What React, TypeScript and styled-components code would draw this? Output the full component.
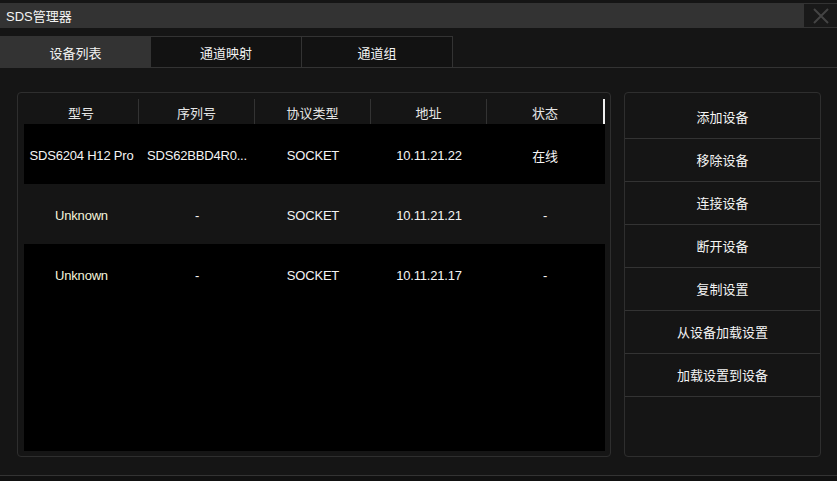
import { FC } from "react";
import styled, { createGlobalStyle } from "styled-components";

const GlobalStyle = createGlobalStyle`
  html, body {
    margin: 0;
    padding: 0;
    background: #151515;
  }
  body {
    font-family: "Liberation Sans", "Noto Sans CJK SC", sans-serif;
    font-size: 13px;
    color: #f2f2f2;
  }
`;

const tabs = ["设备列表", "通道映射", "通道组"];
const columns = ["型号", "序列号", "协议类型", "地址", "状态"];
const rows = [
  ["SDS6204 H12 Pro", "SDS62BBD4R0...", "SOCKET", "10.11.21.22", "在线"],
  ["Unknown", "-", "SOCKET", "10.11.21.21", "-"],
  ["Unknown", "-", "SOCKET", "10.11.21.17", "-"],
];
const actions = [
  "添加设备",
  "移除设备",
  "连接设备",
  "断开设备",
  "复制设置",
  "从设备加载设置",
  "加载设置到设备",
];

const App: FC = () => {
  return (
    <>
      <GlobalStyle />
      <StyledWindow>
        <StyledTitleBar>
          <StyledTitle>SDS管理器</StyledTitle>
          <StyledClose>
            <svg width="18" height="18" viewBox="0 0 18 18">
              <path
                d="M2 2 L16 16 M16 2 L2 16"
                stroke="#444444"
                strokeWidth="2"
                fill="none"
              />
            </svg>
          </StyledClose>
        </StyledTitleBar>
        <StyledTabBar>
          {tabs.map((t, i) => (
            <StyledTab key={t} $active={i === 0}>
              {t}
            </StyledTab>
          ))}
        </StyledTabBar>
        <StyledContent>
          <StyledTablePanel>
            <StyledTable>
              <StyledHeaderRow>
                {columns.map((c) => (
                  <StyledHeaderCell key={c}>{c}</StyledHeaderCell>
                ))}
                <StyledScrollMark />
              </StyledHeaderRow>
              {rows.map((r, i) => (
                <StyledRow key={i} $alt={i % 2 === 1}>
                  {r.map((v, j) => (
                    <StyledCell key={j} $muted={i > 0 && j === 0}>
                      {v}
                    </StyledCell>
                  ))}
                </StyledRow>
              ))}
            </StyledTable>
          </StyledTablePanel>
          <StyledActionPanel>
            {actions.map((a) => (
              <StyledAction key={a}>{a}</StyledAction>
            ))}
          </StyledActionPanel>
        </StyledContent>
        <StyledFooter />
      </StyledWindow>
    </>
  );
};

export default App;

const StyledWindow = styled.div`
  width: 837px;
  height: 481px;
  padding-top: 3px;
  box-sizing: border-box;
  background: #151515;
  display: flex;
  flex-direction: column;
  overflow: hidden;
`;

const StyledTitleBar = styled.div`
  height: 25px;
  background: #333333;
  display: flex;
  align-items: center;
`;

const StyledTitle = styled.div`
  flex: 1;
  padding-left: 6px;
  font-size: 13px;
  color: #f4f4f4;
`;

const StyledClose = styled.div`
  width: 33px;
  height: 23px;
  background: #191919;
  display: flex;
  align-items: center;
  justify-content: center;
`;

const StyledTabBar = styled.div`
  margin-top: 8px;
  height: 31px;
  display: flex;
  border-bottom: 1px solid #333333;
`;

const StyledTab = styled.div<{ $active?: boolean }>`
  width: 151px;
  box-sizing: border-box;
  display: flex;
  align-items: center;
  justify-content: center;
  font-size: 13px;
  background: ${(p) => (p.$active ? "#333333" : "#121212")};
  border: ${(p) => (p.$active ? "none" : "1px solid #333333")};
  border-left: none;
  border-bottom: none;
  padding-top: ${(p) => (p.$active ? "1px" : "1px")};
`;

const StyledContent = styled.div`
  display: flex;
  padding: 24px 0 0 17px;
  gap: 13px;
`;

const StyledTablePanel = styled.div`
  width: 594px;
  height: 365px;
  box-sizing: border-box;
  border: 1px solid #2e2e2e;
  border-radius: 4px;
  padding: 6px 5px 5px 6px;
`;

const StyledTable = styled.div`
  width: 100%;
  height: 100%;
  background: #000000;
  display: flex;
  flex-direction: column;
`;

const StyledHeaderRow = styled.div`
  height: 25px;
  background: #151515;
  display: grid;
  grid-template-columns: 115px 116px 116px 116px 116px 2px;
`;

const StyledHeaderCell = styled.div`
  display: flex;
  align-items: center;
  justify-content: center;
  color: #e6e6e6;
  font-size: 13px;
  padding-top: 1px;
  border-right: 1px solid #333333;
  &:nth-child(5) {
    border-right: none;
  }
`;

const StyledScrollMark = styled.div`
  background: #f0f0f0;
`;

const StyledRow = styled.div<{ $alt?: boolean }>`
  height: 60px;
  background: ${(p) => (p.$alt ? "#151515" : "#000000")};
  display: grid;
  grid-template-columns: 115px 116px 116px 116px 116px 2px;
`;

const StyledCell = styled.div<{ $muted?: boolean }>`
  display: flex;
  align-items: center;
  justify-content: center;
  white-space: nowrap;
  font-size: 13px;
  letter-spacing: -0.2px;
  padding-top: 2px;
  color: ${(p) => (p.$muted ? "#f4f4dc" : "#f4f4f4")};
`;

const StyledActionPanel = styled.div`
  width: 197px;
  height: 365px;
  box-sizing: border-box;
  border: 1px solid #2e2e2e;
  border-radius: 4px;
  padding-top: 3px;
  display: flex;
  flex-direction: column;
`;

const StyledAction = styled.div`
  height: 43px;
  box-sizing: border-box;
  border-bottom: 1px solid #333333;
  display: flex;
  align-items: center;
  justify-content: center;
  padding-bottom: 1px;
  font-size: 13px;
  color: #f4f4f4;
`;

const StyledFooter = styled.div`
  margin-top: auto;
  height: 5px;
  border-top: 1px solid #333333;
  background: #111111;
`;
